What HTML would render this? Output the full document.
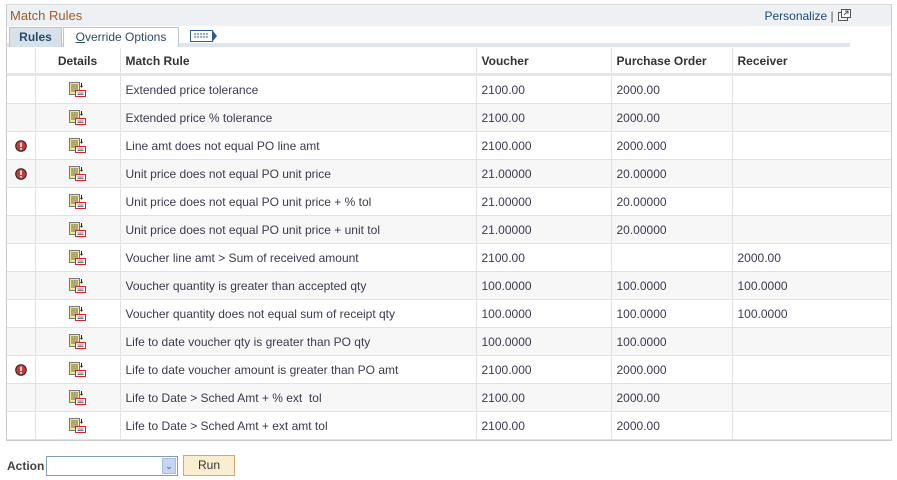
<!DOCTYPE html>
<html><head><style>
body{margin:0;background:#fff;font-family:"Liberation Sans",Arial,sans-serif;font-size:12px;color:#3a3a50;width:897px;height:480px;position:relative;overflow:hidden}
.box{position:absolute;left:6px;top:4px;width:884px;height:435px;border:1px solid #cbcbcb;border-top-color:#d8d8d8}
.hdr{height:21px;background:#edf1f4;position:relative}
.title{position:absolute;left:3px;top:3px;color:#a05a2c;font-size:13px}
.pers{position:absolute;right:40px;top:4px;color:#1e4b7a;font-size:12px}
.pers span{color:#555}
.tabs{height:17px;position:relative;border-bottom:4px solid #dde5ee;width:843px}
.tab{position:absolute;top:1px;height:19px;border:1px solid #b8c4d0;border-bottom:none;font-size:12px;line-height:19px;text-align:center}
table{border-collapse:collapse;position:absolute;left:0;top:43px;width:884px;table-layout:fixed}
td,th{padding:0 0 0 5px;border-left:1px solid #e2e2e2;border-bottom:1px solid #e2e2e2;text-align:left;font-size:12px;white-space:nowrap}
td{height:27px}
th{height:25px;font-weight:bold;color:#333;background:#fff;border-bottom:3px solid #e6e6e6}
tbody tr:nth-child(even) td{background:#f7f7f7}
td:first-child,th:first-child{border-left:none}
</style></head><body>
<svg width="0" height="0" style="position:absolute"><defs>
<g id="d"><rect x="0.5" y="0.5" width="10" height="12" fill="#f2e98a" stroke="#777"/><path d="M2 3h7M2 5h7M2 7h7M2 9h4" stroke="#666"/><path d="M12.5 1v4M11.5 4l1 1 1-1" stroke="#222" fill="none"/><rect x="6.5" y="8.5" width="10" height="6" fill="#fff" stroke="#d82020"/><path d="M8.5 11h6M8.5 12.5h6" stroke="#777"/></g>
<g id="e"><circle cx="6" cy="6" r="5.3" fill="#c93a3a" stroke="#222"/><rect x="5.2" y="2.5" width="1.6" height="4.5" fill="#fff"/><rect x="5.2" y="8" width="1.6" height="1.6" fill="#fff"/></g>
</defs></svg>
<div class="box">
<div class="hdr"><div class="title">Match Rules</div><div class="pers">Personalize <span>|</span> <svg width="14" height="13" style="vertical-align:-2px"><rect x="1.5" y="3.5" width="9" height="8" fill="none" stroke="#555"/><rect x="4.5" y="0.5" width="9" height="8" fill="#fff" stroke="#555"/><path d="M7 6l4-4M8 2h3v3" stroke="#555" fill="none"/></svg></div></div>
<div class="tabs">
<div class="tab" style="left:2px;width:51px;background:#d7e1ea;font-weight:bold;color:#2a4a6a">Rules</div>
<div class="tab" style="left:56px;width:114px;background:#fff;color:#2a4a6a"><u>O</u>verride Options</div>
<svg style="position:absolute;left:183px;top:3px" width="28" height="14"><rect x="0.5" y="1.5" width="22" height="11" fill="#fff" stroke="#2a5a9a"/><path d="M4 5h14M4 8h14" stroke="#2a5a9a" stroke-dasharray="2 1"/><path d="M23 2l4 5-4 5z" fill="#2a5a9a"/></svg>
</div>
<table>
<colgroup><col style="width:28px"><col style="width:85px"><col style="width:356px"><col style="width:135px"><col style="width:121px"><col></colgroup>
<thead><tr><th></th><th style="text-align:center;padding:0">Details</th><th>Match Rule</th><th>Voucher</th><th>Purchase Order</th><th>Receiver</th></tr></thead>
<tbody id="b"></tbody>
</table>
</div>
<div style="position:absolute;left:7px;top:459px;font-weight:bold;color:#444">Action</div>
<div style="position:absolute;left:46px;top:456px;width:130px;height:18px;border:1px solid #7f9db9;background:#fff"><div style="position:absolute;right:1px;top:1px;width:14px;height:16px;background:#c5d5f2;border:1px solid #a7bde8;box-sizing:border-box;font-size:9px;text-align:center;line-height:15px;color:#3a5a9a">&#8964;</div></div>
<div style="position:absolute;left:183px;top:455px;width:50px;height:19px;border:1px solid #d2a870;background:#fbeed0;text-align:center;line-height:19px;color:#333">Run</div>
<script>
var r=[[0,"Extended price tolerance","2100.00","2000.00",""],[0,"Extended price % tolerance","2100.00","2000.00",""],[1,"Line amt does not equal PO line amt","2100.000","2000.000",""],[1,"Unit price does not equal PO unit price","21.00000","20.00000",""],[0,"Unit price does not equal PO unit price + % tol","21.00000","20.00000",""],[0,"Unit price does not equal PO unit price + unit tol","21.00000","20.00000",""],[0,"Voucher line amt > Sum of received amount","2100.00","","2000.00"],[0,"Voucher quantity is greater than accepted qty","100.0000","100.0000","100.0000"],[0,"Voucher quantity does not equal sum of receipt qty","100.0000","100.0000","100.0000"],[0,"Life to date voucher qty is greater than PO qty","100.0000","100.0000",""],[1,"Life to date voucher amount is greater than PO amt","2100.000","2000.000",""],[0,"Life to Date > Sched Amt + % ext  tol","2100.00","2000.00",""],[0,"Life to Date > Sched Amt + ext amt tol","2100.00","2000.00",""]];
var h="";r.forEach(function(x){h+="<tr><td>"+(x[0]?'<svg width="12" height="12" style="vertical-align:middle;margin-left:3px"><use href="#e"/></svg>':"")+'</td><td style="text-align:center;padding:0"><svg width="17" height="15" style="vertical-align:middle"><use href="#d"/></svg></td><td>'+x[1].replace(/  /g," &nbsp;")+"</td><td>"+x[2]+"</td><td>"+x[3]+"</td><td>"+x[4]+"</td></tr>";});
document.getElementById("b").innerHTML=h;
</script>
</body></html>
